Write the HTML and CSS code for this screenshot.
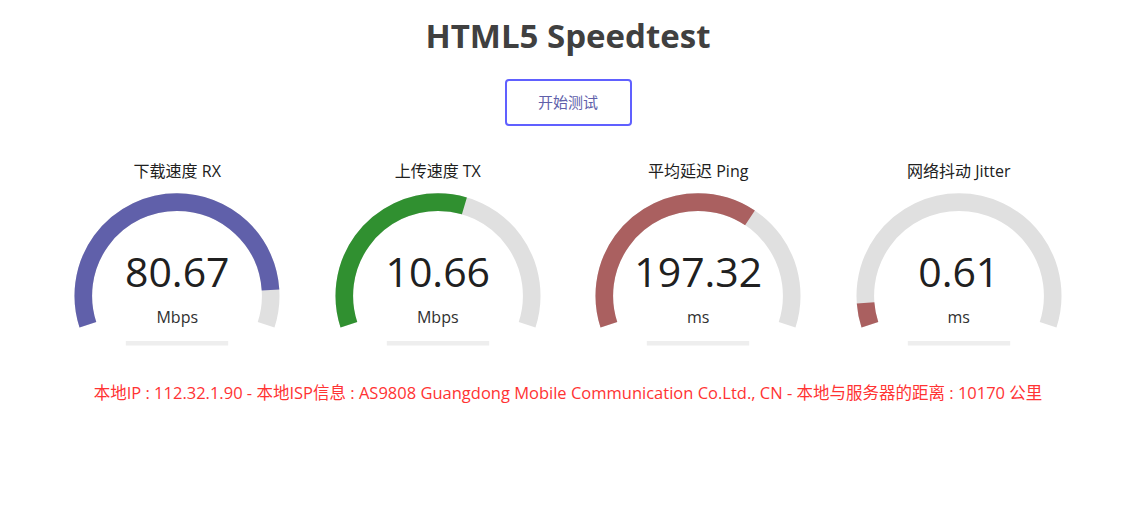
FILE: index.html
```html
<!DOCTYPE html>
<html lang="zh-CN">
<head>
    <meta charset="utf-8" />
    <title>HTML5 Speedtest</title>
    <link rel="stylesheet" href="styles.css">
</head>
<body>

<!--测速面板-->
<div id="page">
    <h1>HTML5 Speedtest</h1>
    <div class="startBtn">开始测试</div>

    <div id="test">
        <div class="testArea">
            <div class="testName">下载速度 RX</div>
            <div class="meter">
                <svg width="256" height="160" viewBox="0 0 256 160">
                    <path class="bk" d="M38.89 136.76 A93.7 93.7 0 1 1 217.11 136.76" pathLength="216" />
                    <path class="fg dl" d="M38.89 136.76 A93.7 93.7 0 1 1 217.11 136.76" pathLength="216" style="stroke-dasharray: 194.4 300" />
                    <rect class="prog" x="76.8" y="153" width="102.4" height="4.5" />
                </svg>
                <div class="meterText">80.67</div>
                <div class="unit">Mbps</div>
            </div>
        </div>
        <div class="testArea">
            <div class="testName">上传速度 TX</div>
            <div class="meter">
                <svg width="256" height="160" viewBox="0 0 256 160">
                    <path class="bk" d="M38.89 136.76 A93.7 93.7 0 1 1 217.11 136.76" pathLength="216" />
                    <path class="fg ul" d="M38.89 136.76 A93.7 93.7 0 1 1 217.11 136.76" pathLength="216" style="stroke-dasharray: 124.4 300" />
                    <rect class="prog" x="76.8" y="153" width="102.4" height="4.5" />
                </svg>
                <div class="meterText">10.66</div>
                <div class="unit">Mbps</div>
            </div>
        </div>
        <div class="testArea">
            <div class="testName">平均延迟 Ping</div>
            <div class="meter">
                <svg width="256" height="160" viewBox="0 0 256 160">
                    <path class="bk" d="M38.89 136.76 A93.7 93.7 0 1 1 217.11 136.76" pathLength="216" />
                    <path class="fg ping" d="M38.89 136.76 A93.7 93.7 0 1 1 217.11 136.76" pathLength="216" style="stroke-dasharray: 141.7 300" />
                    <rect class="prog" x="76.8" y="153" width="102.4" height="4.5" />
                </svg>
                <div class="meterText">197.32</div>
                <div class="unit">ms</div>
            </div>
        </div>
        <div class="testArea">
            <div class="testName">网络抖动 Jitter</div>
            <div class="meter">
                <svg width="256" height="160" viewBox="0 0 256 160">
                    <path class="bk" d="M38.89 136.76 A93.7 93.7 0 1 1 217.11 136.76" pathLength="216" />
                    <path class="fg ping" d="M38.89 136.76 A93.7 93.7 0 1 1 217.11 136.76" pathLength="216" style="stroke-dasharray: 13.7 300" />
                    <rect class="prog" x="76.8" y="153" width="102.4" height="4.5" />
                </svg>
                <div class="meterText">0.61</div>
                <div class="unit">ms</div>
            </div>
        </div>
    </div>

    <div id="ipArea">本地IP : 112.32.1.90 - 本地ISP信息 : AS9808 Guangdong Mobile Communication Co.Ltd., CN - 本地与服务器的距离 : 10170 公里</div>
</div>

</body>
</html>
```

FILE: styles.css
```css
html, body { margin: 0; padding: 0; background: #fff; }
body { font-family: "Open Sans", "Noto Sans CJK SC", sans-serif; color: #202020; }

#page { width: 1136px; text-align: center; }

h1 { margin: 13px 0 0; font-size: 33px; line-height: 46px; font-weight: 700; color: #404040; }

.startBtn { display: inline-block; box-sizing: border-box; width: 127px; height: 47px; margin-top: 20px; border: 2px solid #6060ff; border-radius: 4px; color: #6060aa; font-size: 15px; line-height: 43px; }

#test { display: flex; justify-content: center; gap: 4.5px; margin-top: 34px; }
.testArea { width: 256px; }
.testName { font-size: 16px; line-height: 22px; color: #202020; }
.meter { position: relative; height: 160px; margin-top: 6px; }
.meter svg { display: block; }
.meter .bk, .meter .fg { fill: none; stroke-width: 17.6; }
.meter .bk { stroke: #e0e0e0; }
.meter .dl { stroke: #6060aa; }
.meter .ul { stroke: #309030; }
.meter .ping { stroke: #aa6060; }
.meter .prog { fill: #eeeeee; }

.meterText { position: absolute; top: 59px; left: 0; right: 0; font-size: 41px; line-height: 48px; color: #202020; }
.unit { position: absolute; top: 119px; left: 0; right: 0; font-size: 16px; line-height: 20px; color: #303030; }

#ipArea { margin-top: 33px; font-size: 16.5px; line-height: 24px; color: #ff3333; }
```
